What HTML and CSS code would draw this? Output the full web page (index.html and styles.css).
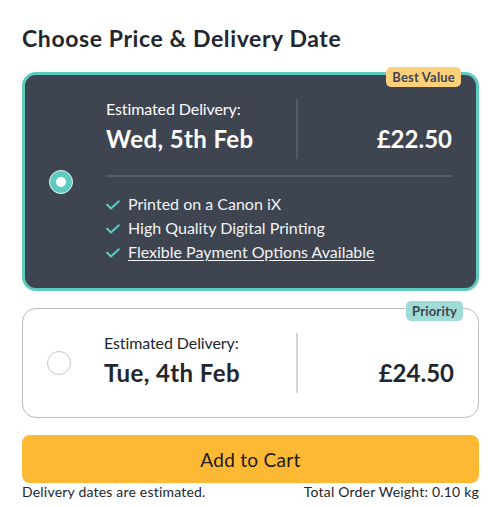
FILE: index.html
```html
<!DOCTYPE html>
<html lang="en">
<head>
<meta charset="utf-8">
<title>Choose Price &amp; Delivery Date</title>
<link rel="stylesheet" href="styles.css">
</head>
<body>
<div class="page">
  <h1 class="title">Choose Price &amp; Delivery Date</h1>

  <div class="option option--selected">
    <span class="badge badge--best">Best Value</span>
    <div class="radio radio--on"><span class="radio-dot"></span></div>
    <div class="option-body">
      <div class="summary">
        <div class="delivery">
          <div class="label">Estimated Delivery:</div>
          <div class="date">Wed, 5th Feb</div>
        </div>
        <div class="vdivider"></div>
        <div class="price">£22.50</div>
      </div>
      <div class="hdivider"></div>
      <ul class="features">
        <li class="feature"><svg class="check" viewBox="0 0 14 10" width="14" height="10"><path d="M1.2 4.8 L5 8.4 L12.8 1.2" fill="none" stroke="#5ecbc0" stroke-width="2" stroke-linecap="round" stroke-linejoin="round"/></svg><span>Printed on a Canon iX</span></li>
        <li class="feature"><svg class="check" viewBox="0 0 14 10" width="14" height="10"><path d="M1.2 4.8 L5 8.4 L12.8 1.2" fill="none" stroke="#5ecbc0" stroke-width="2" stroke-linecap="round" stroke-linejoin="round"/></svg><span>High Quality Digital Printing</span></li>
        <li class="feature"><svg class="check" viewBox="0 0 14 10" width="14" height="10"><path d="M1.2 4.8 L5 8.4 L12.8 1.2" fill="none" stroke="#5ecbc0" stroke-width="2" stroke-linecap="round" stroke-linejoin="round"/></svg><a class="link" href="#">Flexible Payment Options Available</a></li>
      </ul>
    </div>
  </div>

  <div class="option option--plain">
    <span class="badge badge--priority">Priority</span>
    <div class="radio radio--off"></div>
    <div class="option-body">
      <div class="summary">
        <div class="delivery">
          <div class="label">Estimated Delivery:</div>
          <div class="date">Tue, 4th Feb</div>
        </div>
        <div class="vdivider"></div>
        <div class="price">£24.50</div>
      </div>
    </div>
  </div>

  <button class="cart-btn" type="button">Add to Cart</button>

  <div class="footer">
    <span>Delivery dates are estimated.</span>
    <span>Total Order Weight: 0.10 kg</span>
  </div>
</div>
</body>
</html>
```

FILE: styles.css
```css
* { box-sizing: border-box; }

body {
  margin: 0;
  background: #ffffff;
  font-family: Lato, "Open Sans", "Liberation Sans", sans-serif;
  color: #22262e;
}

.page {
  padding: 23px 12px 0 22px;
}

.title {
  margin: 0 0 19px 0;
  font-size: 23px;
  line-height: 30px;
  font-weight: 700;
  letter-spacing: 0.6px;
  color: #22262e;
}

.option {
  position: relative;
  display: flex;
  align-items: center;
  border-radius: 14px;
  padding: 24px;
}

.option--selected {
  border: 3px solid #5ecbc0;
  background: #3e4450;
  color: #ffffff;
}

.option--plain {
  margin-top: 17px;
  border: 1px solid #bcbcbc;
  background: #ffffff;
  color: #22262e;
}

.badge {
  position: absolute;
  top: -8px;
  right: 15px;
  height: 20px;
  padding: 0 6px;
  border-radius: 5px;
  font-size: 13px;
  line-height: 20px;
  font-weight: 700;
  letter-spacing: 0.2px;
  color: #3e4450;
}

.badge--best { background: #fdd17c; }
.badge--priority { background: #a0dbd6; }

.radio {
  flex: 0 0 24px;
  width: 24px;
  height: 24px;
  border-radius: 50%;
  margin-right: 33px;
  display: flex;
  align-items: center;
  justify-content: center;
}

.radio--on {
  background: #5ecbc0;
  border: 1px solid #e6f5f3;
}

.radio-dot {
  width: 10px;
  height: 10px;
  border-radius: 50%;
  background: #ffffff;
}

.radio--off {
  border: 1.5px solid #c6c6c6;
  background: #ffffff;
}

.option-body {
  flex: 1;
  min-width: 0;
}

.summary {
  display: flex;
  height: 60px;
}

.delivery {
  flex: 0 0 190px;
}

.option--plain .delivery {
  flex-basis: 192px;
}

.label {
  font-size: 16px;
  line-height: 20px;
  letter-spacing: -0.1px;
}

.date {
  margin-top: 5px;
  font-size: 24px;
  line-height: 30px;
  font-weight: 700;
  letter-spacing: 0.4px;
}

.vdivider {
  flex: 0 0 2px;
  background: #525a68;
}

.option--plain .vdivider {
  background: #d6d6d6;
}

.price {
  flex: 1;
  display: flex;
  align-items: flex-end;
  justify-content: flex-end;
  padding-bottom: 5px;
  font-size: 24px;
  line-height: 30px;
  font-weight: 700;
}

.hdivider {
  margin-top: 16px;
  height: 2px;
  background: #535b6a;
}

.features {
  list-style: none;
  margin: 15px 0 0 0;
  padding: 0;
}

.feature {
  display: flex;
  align-items: center;
  height: 24px;
  font-size: 16px;
  line-height: 24px;
  color: #f2f3f4;
}

.check {
  flex: 0 0 14px;
  margin-right: 8px;
  margin-top: 2px;
}

.link {
  color: #f2f3f4;
  text-decoration: underline;
  text-underline-offset: 2px;
}

.cart-btn {
  display: block;
  width: 100%;
  height: 48px;
  margin-top: 17px;
  border: 0;
  border-radius: 8px;
  background: #fdb933;
  font-family: inherit;
  font-size: 19px;
  letter-spacing: 0.3px;
  color: #1a1a1a;
  cursor: pointer;
}

.footer {
  display: flex;
  justify-content: space-between;
  margin-top: 1px;
  font-size: 14px;
  line-height: 16px;
  letter-spacing: 0.2px;
  color: #22262e;
}
```
